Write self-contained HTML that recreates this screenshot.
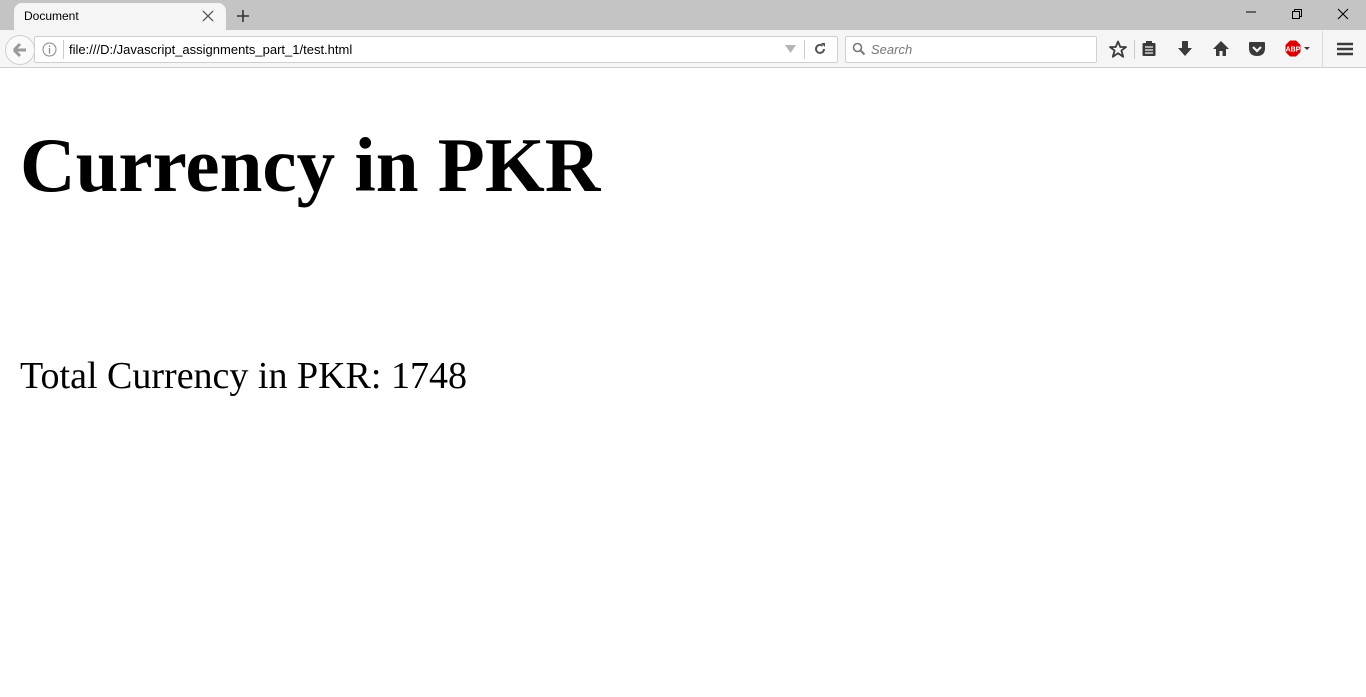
<!DOCTYPE html>
<html><head><meta charset="utf-8"><style>
*{margin:0;padding:0;box-sizing:border-box}
body{width:1366px;height:697px;overflow:hidden;background:#fff;position:relative;font-family:"Liberation Sans",sans-serif}
.abs{position:absolute}
#tabbar{left:0;top:0;width:1366px;height:30px;background:#c4c4c4}
#tab{left:14px;top:3px;width:212px;height:28px;background:#f5f5f5;border-radius:8px 8px 0 0}
#toolbar{left:0;top:30px;width:1366px;height:38px;background:#f5f5f5;border-bottom:1px solid #cfcfcf}
#url{left:34px;top:36px;width:804px;height:27px;background:#fff;border:1px solid #d0d0d0;border-radius:2px}
#search{left:845px;top:36px;width:252px;height:27px;background:#fff;border:1px solid #d0d0d0;border-radius:2px}
.serif{font-family:"Liberation Serif",serif;line-height:1;white-space:nowrap;color:#000}
</style></head><body>
<div id="tabbar" class="abs"></div>
<div id="tab" class="abs"></div>
<div class="abs" style="left:24px;top:9px;font-size:12px;color:#000">Document</div>
<svg class="abs" style="left:202px;top:10px" width="12" height="12"><path d="M1 1L11 11M11 1L1 11" stroke="#444" stroke-width="1.2"/></svg>
<svg class="abs" style="left:236px;top:9px" width="14" height="14"><path d="M7 1V13M1 7H13" stroke="#333" stroke-width="1.6"/></svg>
<svg class="abs" style="left:1245px;top:11px" width="12" height="4"><path d="M1 1H11" stroke="#000"/></svg>
<svg class="abs" style="left:1291px;top:8px" width="12" height="12"><path d="M1.5 3.5H8.5V10.5H1.5Z M3.5 3.5V1.5H10.5V8.5H8.5" stroke="#000" fill="none"/></svg>
<svg class="abs" style="left:1337px;top:8px" width="12" height="12"><path d="M1 1L11 11M11 1L1 11" stroke="#000" stroke-width="1.1"/></svg>
<div id="toolbar" class="abs"></div>
<div id="url" class="abs"></div>
<div class="abs" style="left:5px;top:35px;width:30px;height:30px;border-radius:50%;background:#fafafa;border:1px solid #d0d0d0"></div>
<svg class="abs" style="left:12px;top:42px" width="16" height="16"><path d="M2 8H14M2 8L8 2M2 8L8 14" stroke="#9a9a9a" stroke-width="3" fill="none"/></svg>
<svg class="abs" style="left:42px;top:42px" width="15" height="15"><circle cx="7.5" cy="7.5" r="6.5" stroke="#888" fill="none"/><path d="M7.5 6V11.5M7.5 3.5V5" stroke="#888" stroke-width="1.3"/></svg>
<div class="abs" style="left:63px;top:40px;width:1px;height:19px;background:#ccc"></div>
<div class="abs" style="left:69px;top:42px;font-size:13px;color:#000">file:///D:/Javascript_assignments_part_1/test.html</div>
<svg class="abs" style="left:785px;top:45px" width="12" height="9"><path d="M0 0H11L5.5 8Z" fill="#b5b5b5"/></svg>
<div class="abs" style="left:804px;top:40px;width:1px;height:19px;background:#ccc"></div>
<svg class="abs" style="left:813px;top:42px" width="14" height="14"><path d="M11 7A4 4 0 1 1 9.5 3.8" stroke="#555" stroke-width="2" fill="none"/><path d="M8 1H12V5Z" fill="#555"/></svg>
<div id="search" class="abs"></div>
<svg class="abs" style="left:852px;top:42px" width="14" height="14"><circle cx="5.5" cy="5.5" r="4" stroke="#777" stroke-width="1.6" fill="none"/><path d="M8.5 8.5L12.5 12.5" stroke="#777" stroke-width="2"/></svg>
<div class="abs" style="left:871px;top:42px;font-size:13px;color:#777;font-style:italic">Search</div>
<svg class="abs" style="left:1108px;top:40px" width="20" height="19"><path d="M10 1.5L12.3 7H18L13.4 10.6L15.2 16.8L10 13.2L4.8 16.8L6.6 10.6L2 7H7.7Z" stroke="#3a3a3a" stroke-width="1.8" fill="none" stroke-linejoin="round"/></svg>
<div class="abs" style="left:1134px;top:40px;width:1px;height:19px;background:#ccc"></div>
<svg class="abs" style="left:1141px;top:40px" width="16" height="18"><rect x="1.5" y="3" width="13" height="13" rx="1" fill="#3a3a3a"/><rect x="5" y="1" width="6" height="4" fill="#3a3a3a"/><path d="M4 7H12M4 10H12M4 13H12" stroke="#f5f5f5" stroke-width="1.3"/></svg>
<svg class="abs" style="left:1177px;top:40px" width="16" height="18"><path d="M5 1H11V8H15L8 16L1 8H5Z" fill="#3a3a3a"/></svg>
<svg class="abs" style="left:1212px;top:40px" width="18" height="18"><path d="M9 1L17 9H14V16H10.5V11H7.5V16H4V9H1Z" fill="#3a3a3a"/></svg>
<svg class="abs" style="left:1248px;top:41px" width="18" height="16"><path d="M1 2Q1 1 2 1H16Q17 1 17 2V7Q17 15 9 15Q1 15 1 7Z" fill="#3a3a3a"/><path d="M5 6L9 10L13 6" stroke="#f5f5f5" stroke-width="2.2" fill="none"/></svg>
<svg class="abs" style="left:1284px;top:40px" width="30" height="18"><polygon points="6,0.5 12,0.5 16.5,5 16.5,12 12,16.5 6,16.5 1.5,12 1.5,5" fill="#d80000"/><text x="9" y="11.5" font-size="7" font-weight="bold" fill="#fff" text-anchor="middle" font-family="Liberation Sans,sans-serif">ABP</text><path d="M20 7H26L23 10Z" fill="#3a3a3a"/></svg>
<div class="abs" style="left:1322px;top:31px;width:1px;height:36px;background:#d8d8d8"></div>
<svg class="abs" style="left:1336px;top:42px" width="18" height="14"><path d="M1 2H17M1 7H17M1 12H17" stroke="#3a3a3a" stroke-width="2.4"/></svg>
<div class="abs serif" style="left:20px;top:127px;font-size:77px;font-weight:bold">Currency in PKR</div>
<div class="abs serif" style="left:20px;top:357px;font-size:38px">Total Currency in PKR: 1748</div>
</body></html>
